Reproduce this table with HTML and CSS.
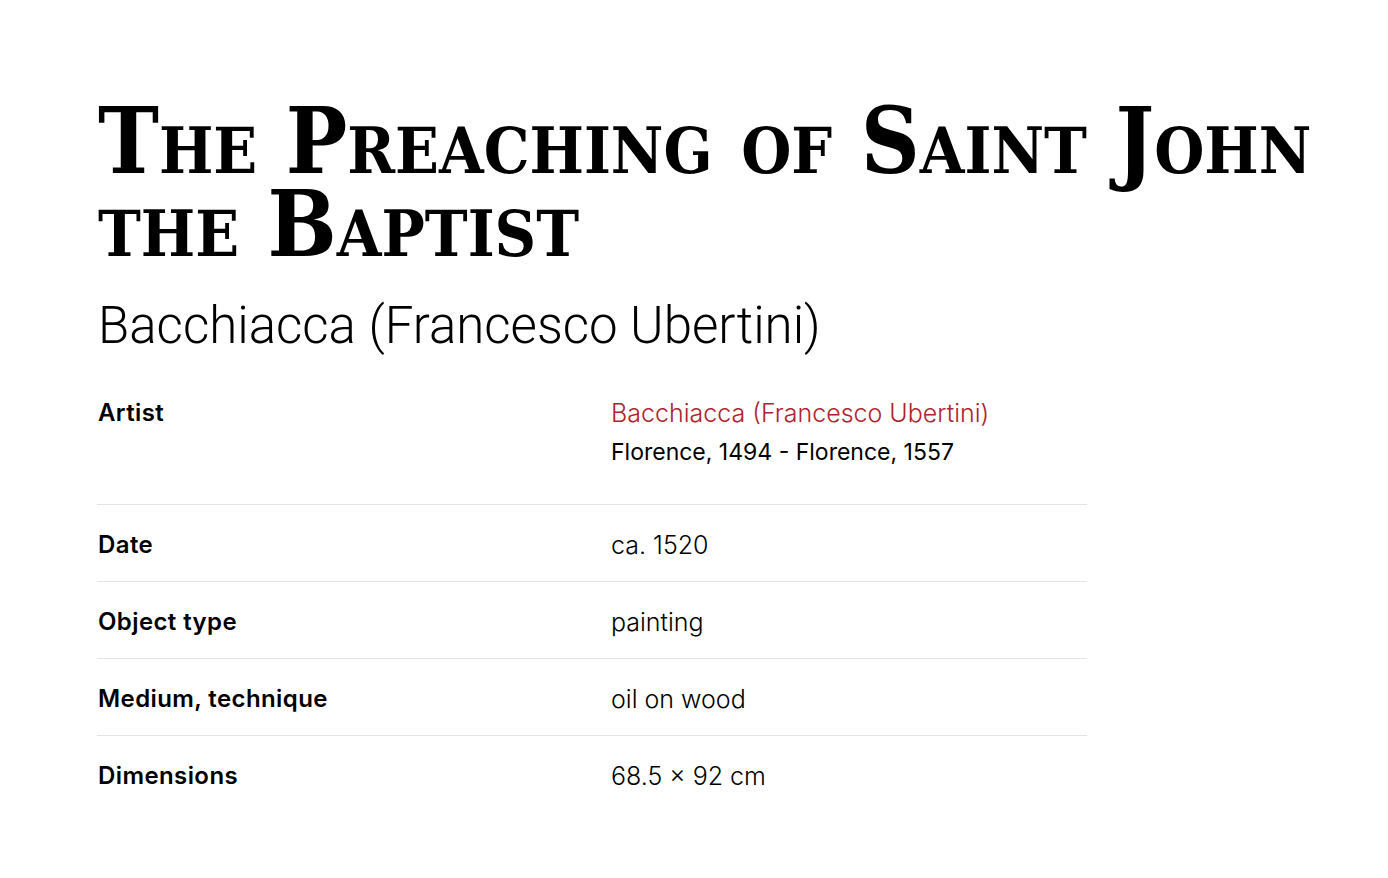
FILE: index.html
```html
<!DOCTYPE html>
<html lang="en">
<head>
  <meta charset="UTF-8">
  <meta name="viewport" content="width=device-width, initial-scale=1.0">
  <title>The Preaching of Saint John the Baptist</title>
  <link rel="stylesheet" href="styles.css">
</head>
<body>
  <main class="object">
    <h1 class="title">The Preaching of Saint John the Baptist</h1>
    <p class="maker">Bacchiacca (Francesco Ubertini)</p>
    <dl class="facts">
      <div class="fact fact-artist">
        <dt>Artist</dt>
        <dd>
          <a class="artist-link" href="#">Bacchiacca (Francesco Ubertini)</a>
          <span class="artist-life">Florence, 1494 - Florence, 1557</span>
        </dd>
      </div>
      <div class="fact">
        <dt>Date</dt>
        <dd>ca. 1520</dd>
      </div>
      <div class="fact">
        <dt>Object type</dt>
        <dd>painting</dd>
      </div>
      <div class="fact">
        <dt>Medium, technique</dt>
        <dd>oil on wood</dd>
      </div>
      <div class="fact">
        <dt>Dimensions</dt>
        <dd>68.5 × 92 cm</dd>
      </div>
    </dl>
  </main>
</body>
</html>
```

FILE: styles.css
```css
body {
  margin: 0;
  background: #fff;
  color: #000;
  font-family: Inter, Arial, sans-serif;
}
.object {
  padding: 100px 0 40px 98px;
}
.title {
  margin: 0;
  font-family: "DejaVu Serif Condensed", "DejaVu Serif", serif;
  font-variant: small-caps;
  font-weight: bold;
  font-size: 91px;
  line-height: 83px;
}
.maker {
  margin: 30px 0 0;
  font-family: Roboto, sans-serif;
  font-weight: 300;
  font-size: 51px;
  line-height: 60px;
}
.facts {
  width: 990px;
  margin: 33px 0 0 -1px;
}
.fact {
  display: grid;
  grid-template-columns: 514px 1fr;
  align-items: center;
  min-height: 72px;
  padding-top: 4px;
  border-bottom: 1px solid #e3e3e3;
}
.fact:last-child {
  border-bottom: none;
}
.fact-artist {
  align-items: start;
  padding: 10px 0 27px;
}
.fact dt {
  font-family: Inter, sans-serif;
  font-weight: 600;
  font-size: 24px;
  letter-spacing: 0.4px;
  line-height: 28px;
  padding-left: 1px;
}
.fact dd {
  margin: 0;
  font-family: Inter, sans-serif;
  font-weight: 300;
  font-size: 25px;
}
.artist-link {
  display: block;
  color: #b0232f;
  text-decoration: none;
  line-height: 28px;
}
.artist-life {
  display: block;
  font-weight: 400;
  font-size: 23px;
  line-height: 50px;
}
```
